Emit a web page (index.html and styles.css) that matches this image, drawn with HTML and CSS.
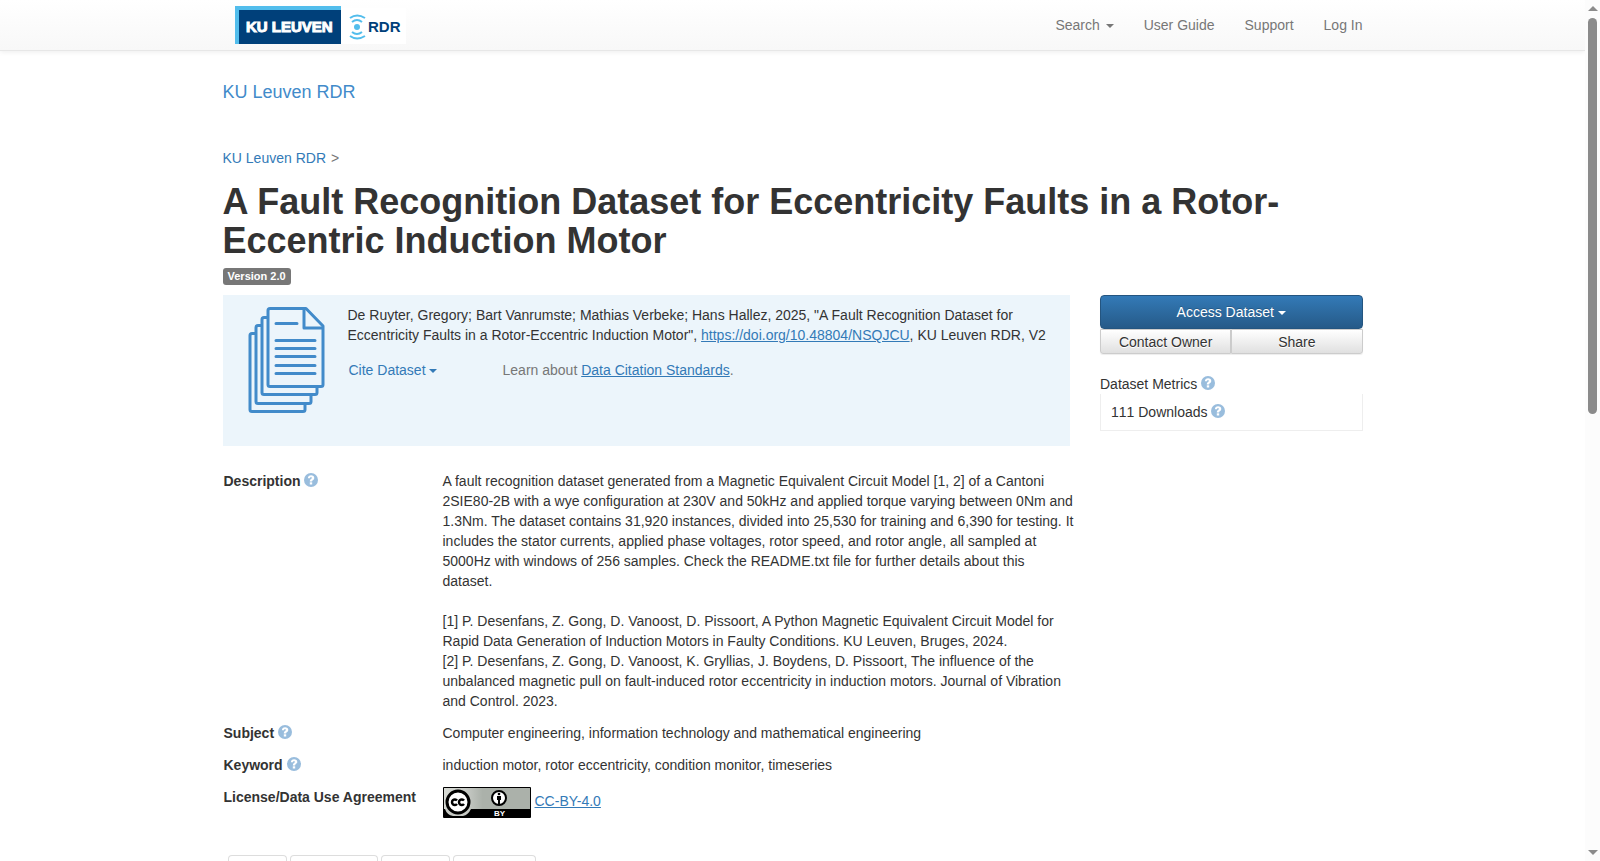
FILE: index.html
```html
<!DOCTYPE html>
<html lang="en">
  <head>
    <meta charset="UTF-8" />
    <meta name="viewport" content="width=device-width, initial-scale=1.0" />
    <title>A Fault Recognition Dataset for Eccentricity Faults - KU Leuven RDR</title>
    <link rel="stylesheet" href="styles.css">
  </head>
  <body>
    <svg width="0" height="0" class="symbols" aria-hidden="true">
      <symbol id="icon-help" viewBox="0 0 14 14">
        <circle cx="7" cy="7" r="7" fill="#99bddd" />
        <path d="M3.900 5.300C3.900 3.200 5.200 2.200 7.100 2.200s3.200 1 3.200 2.700c0 2-2.200 2-2.200 3.500H5.800c0-2.500 2-2.500 2-3.500 0-.5-.3-.8-.8-.8-.6 0-.9.400-.9 1.200z" fill="#fff" />
        <rect x="5.800" y="9.300" width="2.400" height="2.200" fill="#fff" />
      </symbol>
    </svg>

    <div id="viewport">
      <div id="page">
        <!-- Top navigation -->
        <nav class="navbar">
          <div class="container navbar-inner">
            <a href="#" class="logo">
              <svg width="171" height="38" viewBox="0 0 171 38" role="img" aria-label="KU Leuven RDR">
                <rect x="106" y="2" width="65" height="36" fill="#fff" />
                <rect width="106" height="38" fill="#52bdec" />
                <rect x="4" y="4" width="102" height="34" fill="#00407a" />
                <text x="11" y="26" class="logo-name">KU LEUVEN</text>
                <g fill="none" stroke="#52bdec" stroke-width="2">
                  <path d="M115 12q7-5 15 0M117 16q5-4 10 0M117 26q5 4 10 0M115 30q7 5 15 0" />
                </g>
                <circle cx="122" cy="21" r="3" fill="#52bdec" />
                <text x="133" y="26" class="logo-rdr">RDR</text>
              </svg>
            </a>
            <ul class="nav">
              <li><a href="#">Search <span class="caret"></span></a></li>
              <li><a href="#">User Guide</a></li>
              <li><a href="#">Support</a></li>
              <li><a href="#">Log In</a></li>
            </ul>
          </div>
        </nav>

        <div class="container">
          <div class="site-name"><a href="#">KU Leuven RDR</a></div>
          <div class="breadcrumb"><a href="#">KU Leuven RDR</a> &gt;</div>

          <h1>A Fault Recognition Dataset for Eccentricity Faults in a Rotor-Eccentric Induction Motor</h1>
          <div class="version"><span class="label">Version 2.0</span></div>

          <div class="row">
            <div class="col-main">
              <div class="citation">
                <svg class="citation-icon" width="77" height="106" viewBox="0 0 77 106" aria-hidden="true">
                  <g fill="none" stroke="#428bca" stroke-width="3" stroke-linejoin="round">
                    <path d="M7 26.5H4q-2 0-2 2v74q0 2 2 2h51q2 0 2-2v-6" />
                    <path d="M13 18.500H10q-2 0-2 2v74q0 2 2 2h51q2 0 2-2v-6" />
                    <path d="M19 10.500H16q-2 0-2 2v73q0 2 2 2h51q2 0 2-2v-6" />
                    <path d="M58 1.500H22q-2 0-2 2v74q0 2 2 2h51q2 0 2-2V19z" fill="#ecf5fb" />
                    <path d="M56 2v19h19" />
                    <path d="M28 16.500h21M28 33.500h39M28 41.500h39M28 49.500h39M28 58.500h39M28 66.500h39" stroke-linecap="round" />
                  </g>
                </svg>
                <div class="citation-body">
                  <p>De Ruyter, Gregory; Bart Vanrumste; Mathias Verbeke; Hans Hallez, 2025, "A Fault Recognition Dataset for Eccentricity Faults in a Rotor-Eccentric Induction Motor", <a href="#" class="underlined">https://doi.org/10.48804/NSQJCU</a>, KU Leuven RDR, V2</p>
                  <div class="citation-links">
                    <button type="button" class="btn-link">Cite Dataset<span class="caret"></span></button>
                    <span class="muted">Learn about <a href="#" class="underlined">Data Citation Standards</a>.</span>
                  </div>
                </div>
              </div>
            </div>

            <div class="col-side">
              <button type="button" class="btn btn-primary">Access Dataset<span class="caret"></span></button>
              <div class="btn-group">
                <button type="button" class="btn">Contact Owner</button>
                <button type="button" class="btn">Share</button>
              </div>
              <div class="metrics-title">Dataset Metrics <svg class="help"><use href="#icon-help" /></svg></div>
              <div class="metrics-body">111 Downloads <svg class="help"><use href="#icon-help" /></svg></div>
            </div>
          </div>

          <!-- Dataset summary -->
          <dl class="summary">
            <dt>Description <svg class="help"><use href="#icon-help" /></svg></dt>
            <dd>
              A fault recognition dataset generated from a Magnetic Equivalent Circuit Model [1, 2] of a Cantoni 2SIE80-2B with a wye configuration at 230V and 50kHz and applied torque varying between 0Nm and 1.3Nm. The dataset contains 31,920 instances, divided into 25,530 for training and 6,390 for testing. It includes the stator currents, applied phase voltages, rotor speed, and rotor angle, all sampled at 5000Hz with windows of 256 samples. Check the README.txt file for further details about this dataset.<br />
              <br />
              [1] P. Desenfans, Z. Gong, D. Vanoost, D. Pissoort, A Python Magnetic Equivalent Circuit Model for Rapid Data Generation of Induction Motors in Faulty Conditions. KU Leuven, Bruges, 2024.<br />
              [2] P. Desenfans, Z. Gong, D. Vanoost, K. Gryllias, J. Boydens, D. Pissoort, The influence of the unbalanced magnetic pull on fault-induced rotor eccentricity in induction motors. Journal of Vibration and Control. 2023.
            </dd>
            <dt>Subject <svg class="help"><use href="#icon-help" /></svg></dt>
            <dd>Computer engineering, information technology and mathematical engineering</dd>
            <dt>Keyword <svg class="help"><use href="#icon-help" /></svg></dt>
            <dd>induction motor, rotor eccentricity, condition monitor, timeseries</dd>
            <dt>License/Data Use Agreement</dt>
            <dd class="license">
              <svg width="88" height="31" viewBox="0 0 88 31" role="img" aria-label="Creative Commons BY">
                <defs>
                  <linearGradient id="cc-shade">
                    <stop offset="0" stop-color="#d6d9d3" />
                    <stop offset="0.250" stop-color="#c8cbc6" />
                    <stop offset="0.450" stop-color="#abb1aa" />
                  </linearGradient>
                </defs>
                <rect width="88" height="31" rx="1" fill="#000" />
                <rect x="1" y="1" width="86" height="21" fill="url(#cc-shade)" />
                <path d="M2 22h26q-3 6-8 7h-10q-6-1-8-7z" fill="#c8cbc6" />
                <circle cx="15" cy="15" r="11" fill="#fff" stroke="#000" stroke-width="3" />
                <g fill="none" stroke="#000" stroke-width="2.500">
                  <path d="M14 13.500a2.800 2.800 0 1 0 0 3.500M21 13.500a2.800 2.800 0 1 0 0 3.500" />
                </g>
                <circle cx="56" cy="11" r="7" fill="#fff" stroke="#000" stroke-width="2" />
                <circle cx="56" cy="7" r="1.300" />
                <path d="M54 9h4v4h-1v4h-2v-4h-1z" />
                <text x="51" y="29" class="cc-by">BY</text>
              </svg>
              <a href="#" class="underlined">CC-BY-4.0</a>
            </dd>
          </dl>

          <div class="tabs" role="tablist">
            <button type="button" role="tab">Files</button>
            <button type="button" role="tab">Metadata</button>
            <button type="button" role="tab">Terms</button>
            <button type="button" role="tab">Versions</button>
          </div>
        </div>
      </div>

      <div class="scrollbar" aria-hidden="true">
        <span class="arrow-up"></span>
        <span class="track"><span class="thumb"></span></span>
        <span class="arrow-down"></span>
      </div>
    </div>
  </body>
</html>
```
FILE: styles.css
```css
* {
  box-sizing: border-box;
}

body {
  margin: 0;
  font-family: "Liberation Sans", Arial, sans-serif;
  font-size: 14px;
  line-height: 20px;
  color: #333;
  background: #fff;
}

a {
  color: #337ab7;
  text-decoration: none;
}

.underlined {
  text-decoration: underline;
}

button {
  font-family: inherit;
  font-size: 14px;
  line-height: 20px;
  cursor: pointer;
}

.symbols {
  display: block;
}

#viewport {
  display: grid;
  grid-template-columns: minmax(0, 1fr) 15px;
  height: 100vh;
  overflow: hidden;
}

#page {
  min-width: 0;
  overflow: hidden;
}

.container {
  max-width: 1170px;
  margin: 0 auto;
  padding: 0 15px;
}

.caret {
  display: inline-block;
  margin-left: 2px;
  vertical-align: middle;
  border-top: 4px solid;
  border-left: 4px solid transparent;
  border-right: 4px solid transparent;
}

.help {
  width: 14px;
  height: 14px;
  vertical-align: -1px;
}

/* navbar */
.navbar {
  background: linear-gradient(#fff, #f8f8f8);
  border-bottom: 1px solid #e7e7e7;
  box-shadow: 0 1px 5px rgba(0, 0, 0, 0.075);
}

.navbar-inner {
  display: flex;
  justify-content: space-between;
  height: 50px;
  padding-right: 0;
}

.logo {
  padding: 6px 12px;
}

.logo svg {
  display: block;
}

.logo-name {
  font-family: "Liberation Sans", sans-serif;
  font-size: 15px;
  font-weight: bold;
  fill: #fff;
  stroke: #fff;
  stroke-width: 1px;
}

.logo-rdr {
  font-family: "Liberation Sans", sans-serif;
  font-size: 15px;
  font-weight: bold;
  fill: #00407a;
}

.nav {
  display: flex;
  margin: 0;
  padding: 0;
  list-style: none;
}

.nav a {
  display: block;
  padding: 15px;
  color: #777;
}

/* heading */
.site-name {
  padding-top: 31px;
  font-size: 18px;
}

.site-name a {
  color: #428bca;
}

.breadcrumb {
  margin-top: 46px;
  color: #777;
}

.breadcrumb a {
  margin-right: 1px;
}

h1 {
  margin: 14px 0 8px;
  font-size: 36px;
  line-height: 39px;
  font-weight: bold;
}

.version {
  display: flex;
}

.label {
  padding: 0 5px;
  border-radius: 3px;
  background: #777;
  color: #fff;
  font-size: 11px;
  line-height: 17px;
  font-weight: bold;
}

/* citation and side column */
.row {
  display: flex;
  margin: 10px -15px 0;
}

.col-main {
  width: 75%;
  padding: 0 15px;
}

.col-side {
  width: 25%;
  padding: 0 15px;
}

.citation {
  display: flex;
  gap: 23px;
  min-height: 151px;
  padding: 10px 16px 10px 25px;
  background: #ecf5fb;
}

.citation-icon {
  flex: none;
  margin-top: 2px;
}

.citation p {
  margin: 0 0 15px;
}

.citation-links {
  display: flex;
  gap: 65px;
}

.btn-link {
  padding: 0 1px;
  border: 0;
  background: none;
  color: #337ab7;
}

.btn-link .caret {
  margin-left: 3px;
}

.muted {
  color: #777;
}

.btn {
  flex: 1;
  padding: 1px 5px;
  border: 1px solid #ccc;
  background: linear-gradient(#fff, #e0e0e0);
  box-shadow: 0 1px 1px rgba(0, 0, 0, 0.075);
  color: #333;
  text-shadow: 0 1px 0 #fff;
}

.btn-primary {
  display: block;
  width: 100%;
  padding: 6px 12px;
  border-color: #245580;
  border-radius: 4px;
  background: linear-gradient(#337ab7, #265a88);
  color: #fff;
  text-shadow: 0 -1px 0 rgba(0, 0, 0, 0.2);
}

.btn-primary .caret {
  margin-left: 4px;
}

.btn-group {
  display: flex;
}

.btn-group .btn {
  height: 25px;
}

.btn-group .btn:first-child {
  border-bottom-left-radius: 3px;
}

.btn-group .btn:last-child {
  border-bottom-right-radius: 3px;
}

.metrics-title {
  margin-top: 20px;
}

.metrics-body {
  padding: 8px 10px;
  border: 1px solid #eee;
  border-top: 0;
  font-kerning: none;
}

/* summary */
.summary {
  display: grid;
  grid-template-columns: 220px minmax(0, 1fr);
  row-gap: 12px;
  max-width: 855px;
  margin: 25px 0 0;
}

.summary dt {
  padding-left: 1px;
  font-weight: bold;
}

.summary dd {
  margin: 0;
}

.license {
  display: flex;
  gap: 4px;
  line-height: 28px;
}

.cc-by {
  font-family: "Liberation Sans", sans-serif;
  font-size: 8px;
  font-weight: bold;
  fill: #fff;
}

.tabs {
  display: flex;
  gap: 3px;
  margin: 37px 5px 0;
}

.tabs button {
  padding: 8px 14px;
  border: 1px solid #ddd;
  border-bottom: 0;
  border-radius: 4px 4px 0 0;
  background: #fff;
  color: #555;
}

/* scrollbar */
.scrollbar {
  display: flex;
  flex-direction: column;
  align-items: center;
  padding: 6px 0;
  background: #fcfcfc;
}

.track {
  flex: 1;
  width: 9px;
  padding: 7px 0;
}

.thumb {
  display: block;
  height: 48%;
  border-radius: 5px;
  background: #8b8b8b;
}

.arrow-up,
.arrow-down {
  border-left: 5px solid transparent;
  border-right: 5px solid transparent;
}

.arrow-up {
  border-bottom: 5px solid #8b8b8b;
}

.arrow-down {
  border-top: 5px solid #8b8b8b;
}
```
